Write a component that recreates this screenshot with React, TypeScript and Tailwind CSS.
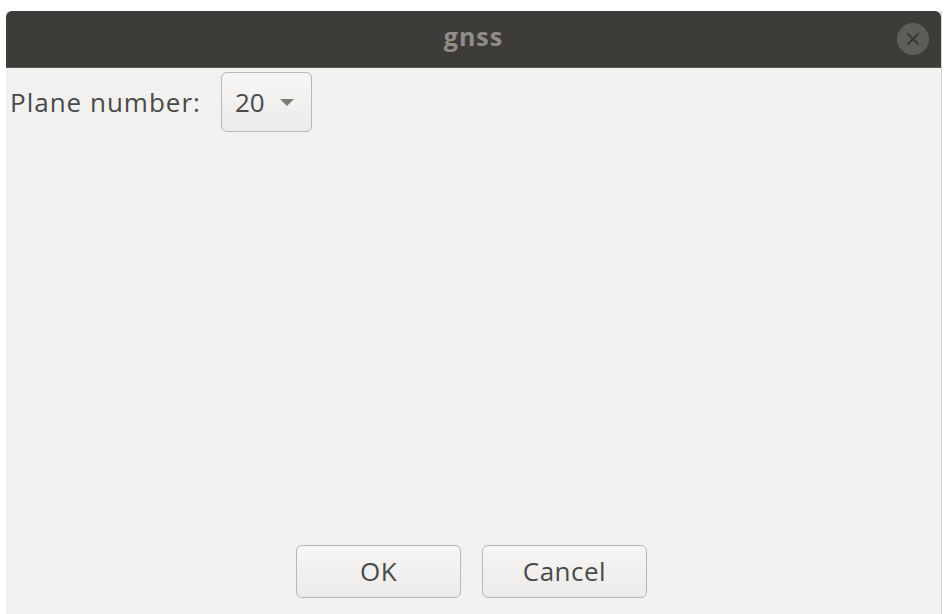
import React from "react";

export default function App() {
  return (
    <div className="w-[952px] h-[614px] bg-white overflow-hidden pt-[11px] pl-[6px]" style={{ fontFamily: '"Open Sans", "Noto Sans", sans-serif' }}>
      <div className="w-[936px] h-[603px] flex flex-col bg-[#f2f1f0] border-r border-[#d4d3d0]">
        <div className="h-[57px] bg-[#3d3c38] rounded-t-[6px] flex items-center justify-center relative border-b border-[#5a5955]">
          <span className="text-[25px] font-bold text-[#8f8d88] tracking-[1px] -mt-[4px]">gnss</span>
          <div className="absolute right-[12px] top-[12px] w-[32px] h-[32px] rounded-full bg-[#5e5d59] flex items-center justify-center">
            <svg width="14" height="14" viewBox="0 0 14 14">
              <path d="M2 2 L12 12 M12 2 L2 12" stroke="#3b3a36" strokeWidth="2.2" strokeLinecap="round" />
            </svg>
          </div>
        </div>
        <div className="flex items-center pl-[4px] pt-[4px]">
          <span className="w-[211px] text-[26px] tracking-[1px] text-[#4a4a48] whitespace-nowrap">Plane number:</span>
          <div className="w-[91px] h-[60px] rounded-[6px] border border-[#b9b7b3] bg-gradient-to-b from-[#f7f6f5] to-[#ecebe9] flex items-center pl-[13px] gap-[14px]">
            <span className="text-[26px] text-[#4a4a48]">20</span>
            <svg width="16" height="9" viewBox="0 0 16 9">
              <path d="M1 1 L15 1 L8 8 Z" fill="#7b7a77" />
            </svg>
          </div>
        </div>
        <div className="flex-1" />
        <div className="flex justify-center gap-[21px] pb-[16px] pr-[4px]">
          <div className="w-[165px] h-[53px] rounded-[6px] border border-[#b9b7b3] bg-gradient-to-b from-[#f7f6f5] to-[#ecebe9] flex items-center justify-center text-[26px] tracking-[0.5px] text-[#4a4a48]">OK</div>
          <div className="w-[165px] h-[53px] rounded-[6px] border border-[#b9b7b3] bg-gradient-to-b from-[#f7f6f5] to-[#ecebe9] flex items-center justify-center text-[26px] tracking-[0.5px] text-[#4a4a48]">Cancel</div>
        </div>
      </div>
    </div>
  );
}
